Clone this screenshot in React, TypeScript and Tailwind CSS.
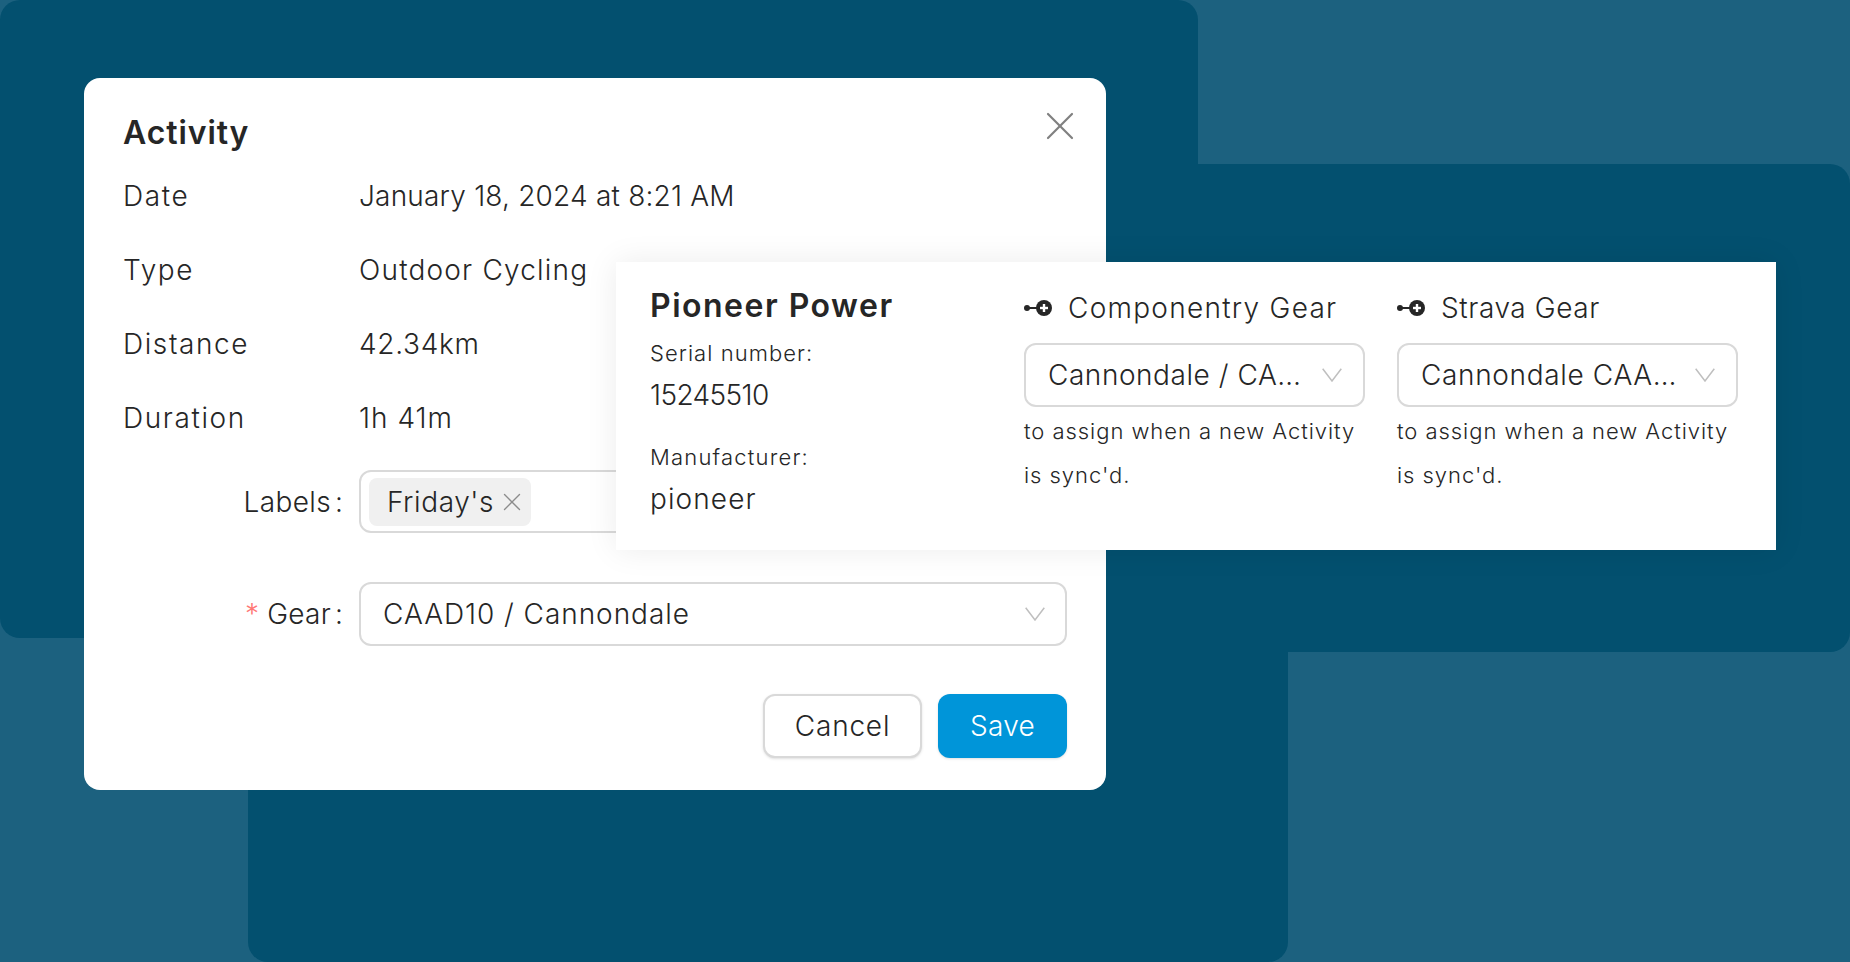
import { X } from 'lucide-react';

const font = { fontFamily: 'Inter, "Noto Sans", sans-serif' };

function GearIcon() {
  return (
    <svg width="28" height="16" viewBox="0 0 28 16" className="shrink-0">
      <circle cx="3" cy="8" r="3" fill="#262626" />
      <rect x="3" y="7" width="10" height="2" fill="#262626" />
      <circle cx="20" cy="8" r="8" fill="#262626" />
      <rect x="16" y="6.8" width="8" height="2.4" fill="#fff" />
      <rect x="18.8" y="4" width="2.4" height="8" fill="#fff" />
    </svg>
  );
}

function Chevron() {
  return (
    <svg width="20" height="14" viewBox="0 0 20 14" fill="none" className="shrink-0">
      <path d="M0.7 0.7L10 13L19.3 0.7" stroke="#bfbfbf" strokeWidth="1.5" />
    </svg>
  );
}

function SelectBox({ text, className }: { text: string; className: string }) {
  return (
    <div className={`flex h-[64px] items-center justify-between rounded-xl border-2 border-[#d9d9d9] bg-white ${className}`}>
      <span className="whitespace-nowrap">{text}</span>
      <Chevron />
    </div>
  );
}

function Row({ label, value, valueClass }: { label: string; value: string; valueClass: string }) {
  return (
    <div className="flex h-[74px] items-center">
      <div className="w-[236px] tracking-[1.6px]">{label}</div>
      <div className={valueClass}>{value}</div>
    </div>
  );
}

function GearColumn({ title, value, titleClass, valueClass }: { title: string; value: string; titleClass: string; valueClass: string }) {
  return (
    <div className="w-[341px] pt-[24px]">
      <div className="flex h-[44px] items-center gap-[16px]">
        <GearIcon />
        <span className={titleClass}>{title}</span>
      </div>
      <SelectBox text={value} className={`mt-[13px] pl-[22px] pr-[21px] ${valueClass}`} />
      <p className="mt-[2px] text-[22px] leading-[44px] tracking-[0.95px]">to assign when a new Activity is sync'd.</p>
    </div>
  );
}

export default function App() {
  return (
    <div style={font} className="relative h-[962px] w-[1850px] overflow-hidden bg-[#1c617f] pt-[78px] pl-[84px] text-[28px] font-light text-[#262626]">
      {/* Background blocks */}
      <div className="absolute left-0 top-0 h-[638px] w-[1198px] rounded-[20px] bg-[#03506f]" />
      <div className="absolute left-[600px] top-[164px] h-[488px] w-[1250px] rounded-[20px] bg-[#03506f]" />
      <div className="absolute left-[248px] top-[300px] h-[662px] w-[1040px] rounded-[20px] bg-[#03506f]" />

      {/* Activity modal */}
      <div className="relative h-[712px] w-[1022px] rounded-2xl bg-white pl-[39px] pr-[39px] pt-[33px]">
        <button className="absolute left-[952px] top-[24px] text-[#808080]">
          <X size={48} strokeWidth={1.1} />
        </button>
        <h2 className="h-[44px] text-[32px] font-semibold leading-[44px] tracking-[0.9px]">Activity</h2>
        <div className="mt-[4px]">
          <Row label="Date" value="January 18, 2024 at 8:21 AM" valueClass="tracking-[0.2px]" />
          <Row label="Type" value="Outdoor Cycling" valueClass="tracking-[1.2px]" />
          <Row label="Distance" value="42.34km" valueClass="tracking-[0.7px]" />
          <Row label="Duration" value="1h 41m" valueClass="tracking-[1px]" />
        </div>

        <div className="mt-[15px] flex items-center">
          <div className="flex w-[220px] justify-end">
            <span className="tracking-[0.4px]">Labels</span>
            <span className="ml-[4px]">:</span>
          </div>
          <div className="ml-[16px] flex h-[63px] flex-1 items-center rounded-xl border-2 border-[#d9d9d9] pl-[8px]">
            <span className="flex h-[48px] w-[162px] items-center gap-[3px] rounded-lg bg-[#f0f0f0] pl-[18px] tracking-[0.6px]">
              Friday's
              <X size={30} strokeWidth={1.1} className="text-[#8c8c8c]" />
            </span>
          </div>
        </div>

        <div className="mt-[49px] flex items-center">
          <div className="flex w-[220px] justify-end">
            <span className="mr-[8px] text-[#ff7875]">*</span>
            <span className="tracking-[0.3px]">Gear</span>
            <span className="ml-[4px]">:</span>
          </div>
          <SelectBox text="CAAD10 / Cannondale" className="ml-[16px] flex-1 pl-[22px] pr-[20px] tracking-[0.95px]" />
        </div>

        <div className="mt-[48px] flex justify-end gap-[16px]">
          <button className="h-[64px] w-[159px] rounded-xl border-2 border-[#d9d9d9] bg-white tracking-[0.8px] shadow-sm">Cancel</button>
          <button className="h-[64px] w-[129px] rounded-xl bg-[#0095d9] tracking-[0.3px] text-white shadow-sm">Save</button>
        </div>

        {/* Pioneer Power popup */}
        <div className="absolute left-[532px] top-[184px] flex h-[288px] w-[1160px] bg-white pl-[34px] shadow-[0_0_30px_rgba(0,0,0,0.08)]">
          <div className="w-[374px] pt-[22px]">
            <h3 className="h-[44px] text-[32px] font-semibold leading-[44px] tracking-[1.5px]">Pioneer Power</h3>
            <div className="mt-[3px] h-[44px] text-[22px] leading-[44px] tracking-[1.05px]">Serial number:</div>
            <div className="h-[40px] leading-[40px] tracking-[-0.6px]">15245510</div>
            <div className="mt-[20px] h-[44px] text-[22px] leading-[44px] tracking-[1.2px]">Manufacturer:</div>
            <div className="h-[40px] leading-[40px] tracking-[1.1px]">pioneer</div>
          </div>
          <div className="flex gap-[32px]">
            <GearColumn title="Componentry Gear" value="Cannondale / CA…" titleClass="tracking-[1.27px]" valueClass="tracking-[0.55px]" />
            <GearColumn title="Strava Gear" value="Cannondale CAA…" titleClass="tracking-[0.6px]" valueClass="tracking-[0.65px]" />
          </div>
        </div>
      </div>
    </div>
  );
}
